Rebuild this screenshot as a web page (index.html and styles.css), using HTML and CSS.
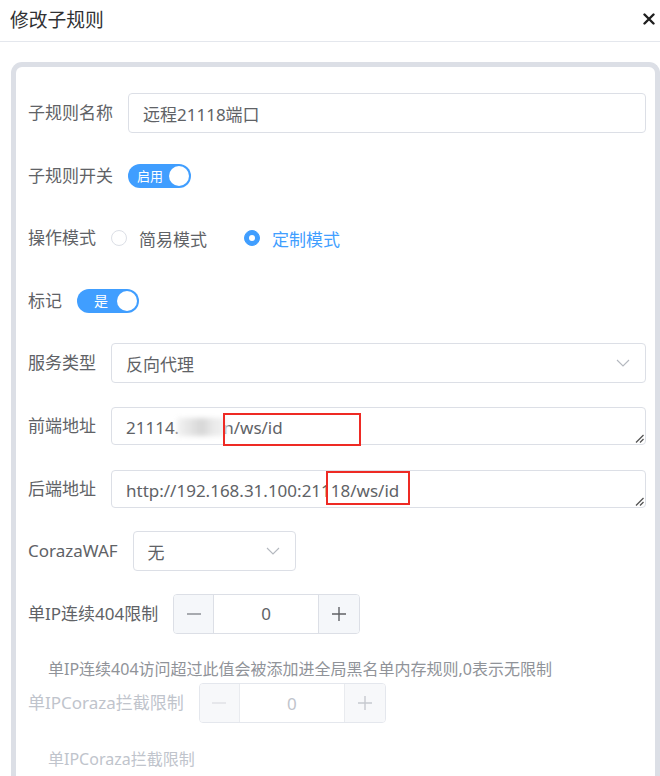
FILE: index.html
```html
<!DOCTYPE html>
<html lang="zh-CN">
<head>
<meta charset="utf-8">
<title>修改子规则</title>
<link rel="stylesheet" href="styles.css">
</head>
<body>
<div class="header">
  <div class="title">修改子规则</div>
  <svg class="close" width="12" height="12" viewBox="0 0 12 12"><path d="M1.5 1.5 L10.5 10.5 M10.5 1.5 L1.5 10.5" stroke="#1f1f1f" stroke-width="2.4" stroke-linecap="round"/></svg>
</div>
<div class="body">
  <div class="card">
    <div class="item">
      <div class="label">子规则名称</div>
      <div class="input grow">远程21118端口</div>
    </div>
    <div class="item">
      <div class="label">子规则开关</div>
      <div class="switch w63"><span class="sw-text">启用</span><span class="knob"></span></div>
    </div>
    <div class="item">
      <div class="label">操作模式</div>
      <div class="radio"><span class="dot"></span><span>简易模式</span></div>
      <div class="radio checked"><span class="dot"></span><span>定制模式</span></div>
    </div>
    <div class="item">
      <div class="label">标记</div>
      <div class="switch w62"><span class="sw-text big">是</span><span class="knob"></span></div>
    </div>
    <div class="item">
      <div class="label">服务类型</div>
      <div class="select grow"><span>反向代理</span>
        <svg class="chev" width="14" height="8" viewBox="0 0 14 8"><path d="M1 1 L7 7 L13 1" fill="none" stroke="#b4b8bf" stroke-width="1.1"/></svg>
      </div>
    </div>
    <div class="item">
      <div class="label">前端地址</div>
      <div class="textarea grow">
        <span>21114.</span><span class="blur"></span><span>n/ws/id</span>
        <svg class="grip" width="9" height="9" viewBox="0 0 9 9"><path d="M8.5 1 L1 8.5 M8.5 5 L5 8.5" stroke="#555" stroke-width="1.3"/></svg>
        <div class="mark mark1"></div>
      </div>
    </div>
    <div class="item">
      <div class="label">后端地址</div>
      <div class="textarea grow">
        <span>http://192.168.31.100:21118/ws/id</span>
        <svg class="grip" width="9" height="9" viewBox="0 0 9 9"><path d="M8.5 1 L1 8.5 M8.5 5 L5 8.5" stroke="#555" stroke-width="1.3"/></svg>
        <div class="mark mark2"></div>
      </div>
    </div>
    <div class="item">
      <div class="label">CorazaWAF</div>
      <div class="select small"><span>无</span>
        <svg class="chev" width="14" height="8" viewBox="0 0 14 8"><path d="M1 1 L7 7 L13 1" fill="none" stroke="#b4b8bf" stroke-width="1.1"/></svg>
      </div>
    </div>
    <div class="item">
      <div class="label">单IP连续404限制</div>
      <div class="num">
        <div class="btn minus"><svg width="16" height="16" viewBox="0 0 16 16"><path d="M1 8 H15" stroke="#8d9096" stroke-width="1.4"/></svg></div>
        <div class="num-val">0</div>
        <div class="btn plus"><svg width="16" height="16" viewBox="0 0 16 16"><path d="M1 8 H15 M8 1 V15" stroke="#606266" stroke-width="1.4"/></svg></div>
      </div>
    </div>
    <div class="help">单IP连续404访问超过此值会被添加进全局黑名单内存规则,0表示无限制</div>
    <div class="item">
      <div class="label disabled">单IPCoraza拦截限制</div>
      <div class="num dis">
        <div class="btn minus"><svg width="16" height="16" viewBox="0 0 16 16"><path d="M1 8 H15" stroke="#e0e2e6" stroke-width="1.4"/></svg></div>
        <div class="num-val">0</div>
        <div class="btn plus"><svg width="16" height="16" viewBox="0 0 16 16"><path d="M1 8 H15 M8 1 V15" stroke="#c6c9cf" stroke-width="1.4"/></svg></div>
      </div>
    </div>
    <div class="help light">单IPCoraza拦截限制</div>
  </div>
</div>
</body>
</html>
```
FILE: styles.css
```css
* { box-sizing: border-box; }
html, body { margin: 0; padding: 0; background: #fff; }
body {
  font-family: "Noto Sans", "Noto Sans CJK SC", sans-serif;
  color: #606266;
  width: 660px;
  height: 776px;
  overflow: hidden;
}
.header {
  height: 42px;
  border-bottom: 1px solid #e4e7ed;
  display: flex;
  align-items: center;
  justify-content: space-between;
  padding: 0 5px 2px 10px;
}
.title {
  font-size: 18.8px;
  color: #303133;
  line-height: 24px;
}
.close { display: block; margin-top: -2px; }
.body { padding-top: 20px; }
.card {
  margin-left: 11px;
  width: 649px;
  height: 714px;
  overflow: hidden;
  border: 5px solid #dcdfe6;
  border-bottom: 0;
  border-radius: 11px 11px 0 0;
  padding: 26px 9px 0 12px;
  background: #fff;
}
.item {
  display: flex;
  align-items: center;
  height: 40px;
  margin-bottom: 22.6px;
}
.label {
  font-size: 17px;
  line-height: 40px;
  color: #606266;
  margin-right: 15px;
  white-space: nowrap;
}
.label.disabled { color: #c0c4cc; }
.grow { flex: 1; }
.input, .select, .textarea {
  height: 40px;
  border: 1px solid #dcdfe6;
  border-radius: 4px;
  font-size: 17px;
  color: #606266;
  display: flex;
  align-items: center;
  padding: 0 14px;
  white-space: nowrap;
}
.select { justify-content: space-between; }
.select.small { width: 163px; }
.chev { display: block; margin-right: 1px; }
.textarea {
  height: 38px;
  position: relative;
  padding-top: 3px;
  align-self: flex-start;
  margin-top: 1px;
}
.blur {
  display: inline-block;
  width: 50px;
  height: 18px;
  margin: 0 -4px 0 -2px;
  background: linear-gradient(90deg, #f3f3f3 0%, #e2e2e2 30%, #d6d6d6 50%, #e8e8e8 70%, #f4f4f4 100%);
  filter: blur(2.5px);
}
.grip { position: absolute; right: 1px; bottom: 1px; }
.mark {
  position: absolute;
  border: 2px solid #ee2a24;
}
.mark1 { left: 111px; top: 5px; width: 138px; height: 33px; }
.mark2 { left: 214px; top: 0px; width: 84px; height: 34px; }

.switch {
  height: 24px;
  border-radius: 12px;
  background: #409eff;
  display: flex;
  align-items: center;
  padding: 2px;
}
.w63 { width: 63px; }
.w62 { width: 62px; }
.sw-text {
  flex: 1;
  text-align: center;
  color: #fff;
  font-size: 13px;
  line-height: 20px;
  padding-left: 1px;
}
.sw-text.big { font-size: 14px; padding-left: 6px; }
.knob {
  width: 20px;
  height: 20px;
  border-radius: 50%;
  background: #fff;
}
.radio {
  display: flex;
  align-items: center;
  font-size: 17px;
  color: #606266;
}
.radio .dot {
  width: 16px;
  height: 16px;
  border-radius: 50%;
  border: 1px solid #dcdfe6;
  background: #fff;
  margin-right: 12px;
  position: relative;
}
.radio.checked { margin-left: 37px; color: #409eff; }
.radio.checked .dot { background: #409eff; border-color: #409eff; }
.radio.checked .dot::after {
  content: "";
  position: absolute;
  left: 4px; top: 4px;
  width: 6px; height: 6px;
  border-radius: 50%;
  background: #fff;
}
.num {
  width: 187px;
  height: 40px;
  border: 1px solid #dcdfe6;
  border-radius: 4px;
  display: flex;
  overflow: hidden;
}
.btn {
  width: 40px;
  background: #f5f7fa;
  display: flex;
  align-items: center;
  justify-content: center;
}
.btn.minus { border-right: 1px solid #dcdfe6; }
.btn.plus { border-left: 1px solid #dcdfe6; width: 41px; }
.num-val {
  flex: 1;
  display: flex;
  align-items: center;
  justify-content: center;
  font-size: 17px;
  color: #606266;
  background: #fff;
}
.num.dis { border-color: #e4e7ed; }
.num.dis .btn { background: #f7f8fa; border-color: #e9ebef; }
.num.dis .num-val { color: #c0c4cc; }
.help {
  font-size: 16px;
  line-height: 27px;
  color: #909399;
  padding-left: 20px;
  white-space: nowrap;
}
.help.light { color: #c0c4cc; }
```
